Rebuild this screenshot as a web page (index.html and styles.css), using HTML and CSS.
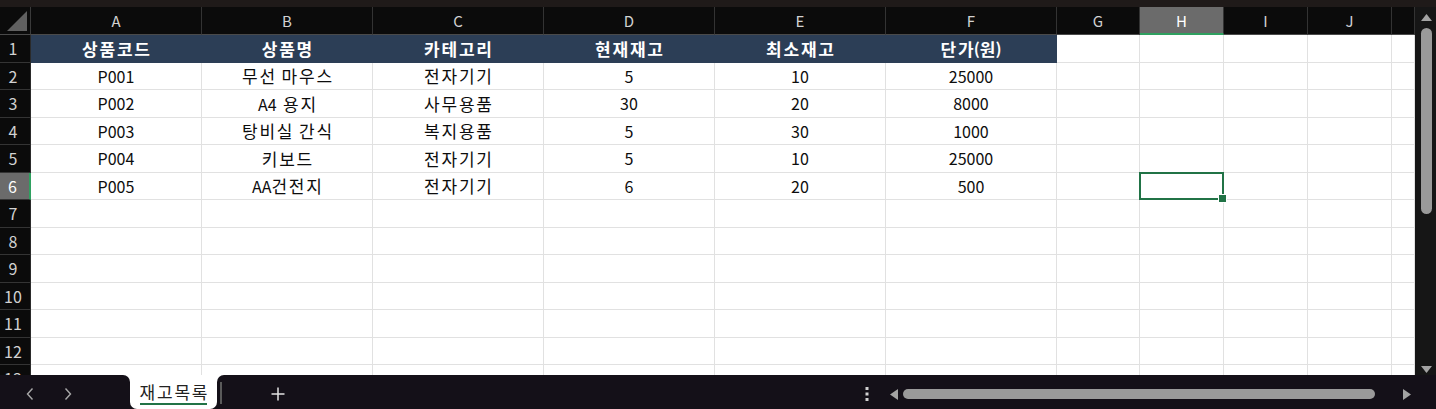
FILE: index.html
```html
<!DOCTYPE html>
<html lang="ko">
<head>
    <meta charset="UTF-8" />
    <meta name="viewport" content="width=device-width, initial-scale=1.0" />
    <title>재고목록</title>
    <link rel="stylesheet" href="styles.css">
</head>
<body>
    <div class="topbar"></div>

    <div class="main">
        <div class="sheet">
            <div id="grid" class="grid"></div>
        </div>

        <!-- vertical scrollbar -->
        <div class="vscroll">
            <svg class="v-arrow" width="11" height="7" viewBox="0 0 11 7"><polygon points="5.5,0 11,7 0,7" /></svg>
            <div class="v-thumb"></div>
            <div class="spacer"></div>
            <svg class="v-arrow down" width="11" height="7" viewBox="0 0 11 7"><polygon points="0,0 11,0 5.5,7" /></svg>
        </div>
    </div>

    <!-- sheet tabs -->
    <div class="tabbar">
        <div class="nav">
            <svg width="8" height="12" viewBox="0 0 8 12"><polyline points="6.5,0.5 1.5,6 6.5,11.5" /></svg>
            <svg width="8" height="12" viewBox="0 0 8 12"><polyline points="1.5,0.5 6.5,6 1.5,11.5" /></svg>
        </div>
        <div class="tab"><span class="tab-label"><span class="ko">재고목록</span></span></div>
        <div class="rest">
            <div class="sep"></div>
            <svg class="add" width="14" height="14" viewBox="0 0 14 14"><path d="M7 0.5V13.5M0.5 7H13.5" /></svg>

            <div class="hscroll">
                <svg class="more" width="4" height="14" viewBox="0 0 4 14">
                    <rect x="0.5" y="0" width="3" height="3" />
                    <rect x="0.5" y="5.5" width="3" height="3" />
                    <rect x="0.5" y="11" width="3" height="3" />
                </svg>
                <svg class="h-arrow" width="8" height="11" viewBox="0 0 8 11"><polygon points="8,0 8,11 0,5.5" /></svg>
                <div class="track"><div class="h-thumb"></div></div>
                <svg class="h-arrow" width="8" height="11" viewBox="0 0 8 11"><polygon points="0,0 8,5.5 0,11" /></svg>
            </div>
        </div>
    </div>

    <script>
        const columns = ['A', 'B', 'C', 'D', 'E', 'F', 'G', 'H', 'I', 'J', ''];
        const data = [
            ['상품코드', '상품명', '카테고리', '현재재고', '최소재고', '단가(원)'],
            ['P001', '무선 마우스', '전자기기', '5', '10', '25000'],
            ['P002', 'A4 용지', '사무용품', '30', '20', '8000'],
            ['P003', '탕비실 간식', '복지용품', '5', '30', '1000'],
            ['P004', '키보드', '전자기기', '5', '10', '25000'],
            ['P005', 'AA건전지', '전자기기', '6', '20', '500']
        ];
        const activeRow = 6;
        const activeCol = 'H';
        const grid = document.getElementById('grid');

        function addCell(cls, text) {
            let cell = document.createElement('div');
            let label = document.createElement('span');
            cell.className = 'cell ' + cls;
            label.textContent = text || '';
            // hangul runs get their own span so they can be sized apart from latin
            label.innerHTML = label.innerHTML.replace(/([가-힣]+)/g, '<span class="ko">$1</span>');
            cell.appendChild(label);
            grid.appendChild(cell);
            return cell;
        }

        // select-all corner
        addCell('corner').innerHTML = '<svg width="20" height="20" viewBox="0 0 20 20"><polygon points="20,0 20,20 0,20" /></svg>';

        columns.forEach(c => addCell('col-head' + (c === activeCol ? ' active-head' : ''), c));

        for (let r = 1; r <= 13; r++) {
            addCell('row-head' + (r === activeRow ? ' active-head' : ''), r);
            columns.forEach((c, i) => {
                let value = data[r - 1] ? data[r - 1][i] : '';
                let cls = '';
                if (r === 1 && i < 6) cls = 'title';
                if (r === activeRow && c === activeCol) cls = 'selected';
                addCell(cls, value);
            });
        }
    </script>
</body>
</html>
```

FILE: styles.css
```css
* {
    box-sizing: border-box;
}

html, body {
    margin: 0;
    height: 100%;
}

body {
    background: #1f1a19;
    font-family: "Noto Sans CJK KR", "Noto Sans", sans-serif;
    display: flex;
    flex-direction: column;
    overflow: hidden;
}

.topbar {
    height: 7px;
    flex: none;
}

.main {
    flex: 1;
    display: flex;
    min-height: 0;
}

.sheet {
    flex: 1;
    overflow: hidden;
    background: #fff;
}

.grid {
    display: grid;
    grid-template-columns: 31px repeat(6, 171px) 83px 84px 84px 84px 1fr;
    grid-template-rows: 28px;
    grid-auto-rows: 27.5px;
}

.cell {
    display: flex;
    align-items: center;
    justify-content: center;
    border-right: 1px solid #e1e1e1;
    border-bottom: 1px solid #e1e1e1;
    font-size: 16px;
    line-height: 1;
    color: #0d0d0d;
    white-space: pre;
    word-spacing: 2px;
}

.ko {
    font-size: 17px;
    letter-spacing: 1.8px;
    margin-right: -1.8px;
}

.corner {
    background: #0b0b0b;
    border-right: 1px solid #3a3a3a;
    border-bottom: 1px solid #4a4a4a;
    align-items: flex-end;
    justify-content: flex-end;
    padding: 0 3px 3px 0;
}

    .corner svg {
        fill: #606060;
    }

.col-head {
    background: #0b0b0b;
    color: #d2d2d2;
    font-size: 15px;
    border-right: 1px solid #333;
    border-bottom: 1px solid #4a4a4a;
}

.row-head {
    background: #0b0b0b;
    color: #d2d2d2;
    font-size: 16px;
    padding-right: 4px;
    border-right: 1px solid #2a2a2a;
    border-bottom: 1px solid #343434;
}

.active-head {
    background: #6b6b6b;
    color: #fff;
}

.col-head.active-head {
    border-bottom: 2px solid #2fa060;
}

.row-head.active-head {
    border-right: 2px solid #2fa060;
}

.title {
    background: #2c3e56;
    border-color: #2c3e56;
    color: #fff;
    font-weight: 700;
}

.selected {
    position: relative;
}

    .selected::before {
        content: "";
        position: absolute;
        top: -1px;
        left: -1px;
        right: -1px;
        bottom: -1px;
        border: 2px solid #217346;
    }

    .selected::after {
        content: "";
        position: absolute;
        right: -4px;
        bottom: -4px;
        width: 7px;
        height: 7px;
        background: #217346;
        border: 1px solid #fff;
    }

/* scrollbars */
.vscroll {
    width: 21px;
    flex: none;
    background: #161616;
    display: flex;
    flex-direction: column;
    align-items: center;
    padding: 7px 0 2px 1px;
}

.v-arrow {
    fill: #a3a3a3;
}

.v-thumb {
    width: 11px;
    height: 186px;
    margin-top: 7px;
    border-radius: 6px;
    background: #9a9a9a;
}

.spacer {
    flex: 1;
}

.tabbar {
    height: 34px;
    flex: none;
    display: flex;
    background: linear-gradient(#fff 50%, #141018 50%);
}

.nav {
    width: 130px;
    background: #141018;
    border-top-right-radius: 7px;
    display: flex;
    align-items: center;
    gap: 30px;
    padding: 4px 0 0 26px;
}

    .nav svg {
        fill: none;
        stroke: #a8a8a8;
        stroke-width: 1.4;
    }

.tab {
    width: 87px;
    flex: none;
    background: #fff;
    border-radius: 0 0 7px 7px;
    display: flex;
    justify-content: center;
    padding-top: 6px;
}

.tab-label {
    height: 24px;
    font-size: 16px;
    line-height: 1;
    white-space: nowrap;
    color: #222;
    padding: 2px 0 0;
    border-bottom: 2px solid #217346;
}

.rest {
    flex: 1;
    background: #141018;
    border-top-left-radius: 7px;
    display: flex;
    align-items: center;
    padding-top: 4px;
}

.sep {
    width: 2px;
    height: 22px;
    margin: -3px 0 0 3px;
    background: #5a5a5a;
}

.add {
    margin-left: 49px;
    fill: none;
    stroke: #e2e2e2;
    stroke-width: 1.5;
}

.hscroll {
    margin-left: auto;
    margin-right: 25px;
    display: flex;
    align-items: center;
}

.more {
    fill: #d0d0d0;
    margin-right: 21px;
}

.h-arrow {
    fill: #a3a3a3;
}

.track {
    width: 505px;
    padding-left: 5px;
}

.h-thumb {
    width: 472px;
    height: 10px;
    border-radius: 5px;
    background: #9a9a9a;
}
```
